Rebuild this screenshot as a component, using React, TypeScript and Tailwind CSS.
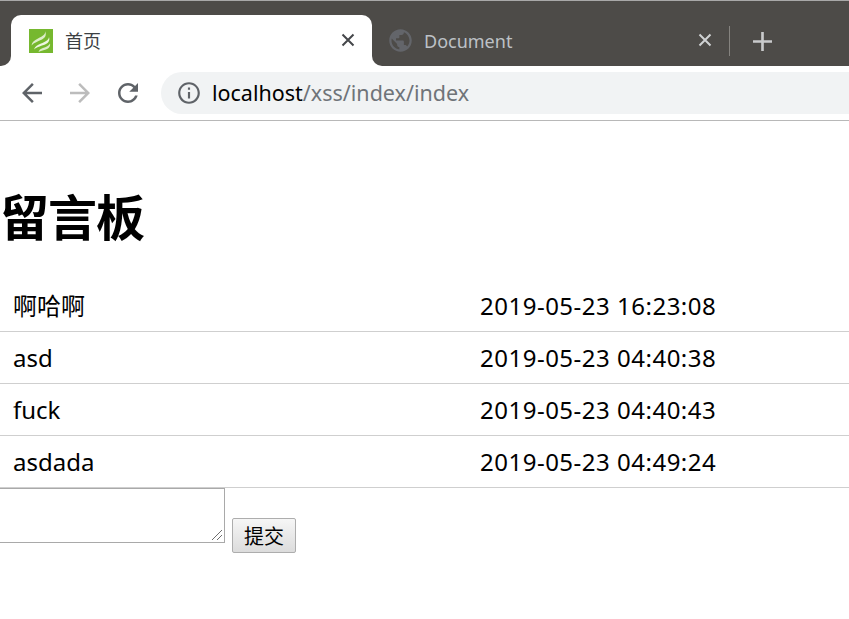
import React from "react";

const font = { sans: "font-['Noto_Sans','Noto_Sans_CJK_SC',sans-serif]" };

const rows = [
  { text: "啊哈啊", time: "2019-05-23 16:23:08" },
  { text: "asd", time: "2019-05-23 04:40:38" },
  { text: "fuck", time: "2019-05-23 04:40:43" },
  { text: "asdada", time: "2019-05-23 04:49:24" },
];

const Icon = ({ d, className }: { d: string; className: string }) => (
  <svg viewBox="0 0 24 24" fill="currentColor" className={className}>
    <path d={d} />
  </svg>
);

const ARROW = "M20 11H7.83l5.59-5.59L12 4l-8 8 8 8 1.41-1.41L7.83 13H20v-2z";
const RELOAD =
  "M17.65 6.35C16.2 4.9 14.21 4 12 4c-4.42 0-7.99 3.58-7.99 8s3.57 8 7.99 8c3.73 0 6.84-2.55 7.73-6h-2.08c-.82 2.33-3.04 4-5.65 4-3.31 0-6-2.69-6-6s2.69-6 6-6c1.66 0 3.14.69 4.22 1.78L13 11h7V4l-2.35 2.35z";
const INFO =
  "M11 7h2v2h-2zm0 4h2v6h-2zm1-9C6.48 2 2 6.48 2 12s4.48 10 10 10 10-4.48 10-10S17.52 2 12 2zm0 18c-4.41 0-8-3.59-8-8s3.59-8 8-8 8 3.59 8 8-3.59 8-8 8z";
const GLOBE =
  "M12 2C6.48 2 2 6.48 2 12s4.48 10 10 10 10-4.48 10-10S17.52 2 12 2zm-1 17.93c-3.95-.49-7-3.85-7-7.93 0-.62.08-1.21.21-1.79L9 15v1c0 1.1.9 2 2 2v1.93zm6.9-2.54c-.26-.81-1-1.39-1.9-1.39h-1v-3c0-.55-.45-1-1-1H8v-2h2c.55 0 1-.45 1-1V7h2c1.1 0 2-.9 2-2v-.41c2.93 1.19 5 4.06 5 7.41 0 2.08-.8 3.97-2.1 5.39z";

const CloseX = ({ className }: { className: string }) => (
  <svg viewBox="0 0 14 14" fill="none" stroke="currentColor" strokeWidth="2" className={className}>
    <path d="M1.5 1.5l11 11M12.5 1.5l-11 11" />
  </svg>
);

const Favicon = () => (
  <svg viewBox="0 0 24 24" className="w-6 h-6 shrink-0">
    <rect width="24" height="24" fill="#76b82f" />
    <path d="M16 2c1 3-2 5-7 7.500C5 11.500 3 13 2.500 16.500 5 13.500 9 12.500 13 10.500c3-1.500 5-4.500 3-8.500z" fill="#dcedc8" />
    <path d="M20 8c0 3-4 5-8 6.500-4 1.500-6 3-7 6 3-3 8-3.500 12-5.500 3-1.500 4-4.500 3-7z" fill="#eef6e2" />
    <path d="M21 14.500c-1 2.500-4 3.500-7 4.500-2.500.8-4 2-4.500 4 3-2 7-1.500 9.500-3.500 1.500-1.300 2.500-3 2-5z" fill="#dcedc8" />
  </svg>
);

export default function App() {
  return (
    <div className={`w-[849px] h-[619px] overflow-hidden bg-white text-black ${font.sans}`}>
      {/* tab strip */}
      <div className="flex h-[66px] bg-white">
        <div className="w-[11px] bg-[#4d4b48] rounded-br-[10px] border-t border-[#a8a8a8]" />
        <div className="w-[361px] bg-[#4d4b48] border-t border-[#a8a8a8] pt-[14px]">
          <div className="h-[51px] bg-white rounded-t-[10px] flex items-center pl-[18px] pr-[17px]">
            <Favicon />
            <span className="ml-3 mt-[2px] text-[18px] text-[#3c4043] flex-1">首页</span>
            <CloseX className="w-[14px] h-[14px] text-[#45474a] -mt-[2px]" />
          </div>
        </div>
        <div className="flex-1 bg-[#4d4b48] rounded-bl-[10px] border-t border-[#a8a8a8] flex items-center pt-[14px] pl-[16px]">
          <Icon d={GLOBE} className="w-[27px] h-[27px] text-[#63656a] shrink-0 -ml-[1px]" />
          <span className="ml-[10px] mt-[2px] w-[274px] text-[18px] text-[#bdc1c6]">Document</span>
          <CloseX className="w-[14px] h-[14px] text-[#d0d2d4] -mt-[2px]" />
          <div className="ml-[17px] w-px h-[30px] bg-[#85837f]" />
          <svg viewBox="0 0 18 18" fill="none" stroke="#c9cacb" strokeWidth="2.500" className="ml-[23px] mt-[2px] w-[19px] h-[19px]">
            <path d="M9 0v18M0 9h18" />
          </svg>
        </div>
      </div>

      {/* toolbar */}
      <div className="flex items-center h-[55px] pb-[1px] border-b border-[#b8b8b8] pl-[17px]">
        <Icon d={ARROW} className="w-[30px] h-[30px] text-[#5f6368] shrink-0" />
        <Icon d={ARROW} className="w-[30px] h-[30px] text-[#bcbcbc] shrink-0 ml-[18px] rotate-180" />
        <Icon d={RELOAD} className="w-[30px] h-[30px] text-[#5f6368] shrink-0 ml-[18px]" />
        <div className="ml-[18px] flex-1 h-[42px] bg-[#f1f3f4] rounded-l-full flex items-center pl-[15px]">
          <Icon d={INFO} className="w-[26px] h-[26px] text-[#5f6368] shrink-0" />
          <span className="ml-[10px] text-[21.500px] leading-none whitespace-nowrap text-black">
            localhost<span className="text-[#6f7479]">/xss/index/index</span>
          </span>
        </div>
      </div>

      {/* page */}
      <h1 className="mt-[60px] text-[49px] tracking-[-1px] leading-[68px] font-bold font-['Noto_Sans_CJK_SC',sans-serif]">留言板</h1>

      <div className="mt-[31px] text-[24px]">
        {rows.map((row) => (
          <div key={row.time} className="flex items-center h-[52px] border-b border-[#cfcfcf] pl-[13px]">
            <div className="w-[467px]">{row.text}</div>
            <div className="tracking-[0.5px]">{row.time}</div>
          </div>
        ))}
      </div>

      <div className="flex items-end -ml-[10px]">
        <div className="relative">
          <textarea className="block w-[235px] h-[55px] border border-[#a9a9a9] bg-white outline-none resize-none" />
          <svg viewBox="0 0 12 12" fill="none" stroke="#6e6e6e" strokeWidth="1" className="absolute right-[2px] bottom-[2px] w-3 h-3">
            <path d="M1 11L11 1M6 11l5-5" />
          </svg>
        </div>
        <button className="ml-[7px] mb-[-10px] w-[64px] h-[35px] border border-[#adadad] rounded-[2px] bg-gradient-to-b from-[#f6f6f6] to-[#dcdcdc] text-[20px] leading-none font-['Noto_Sans_CJK_SC',sans-serif]">
          提交
        </button>
      </div>
    </div>
  );
}
